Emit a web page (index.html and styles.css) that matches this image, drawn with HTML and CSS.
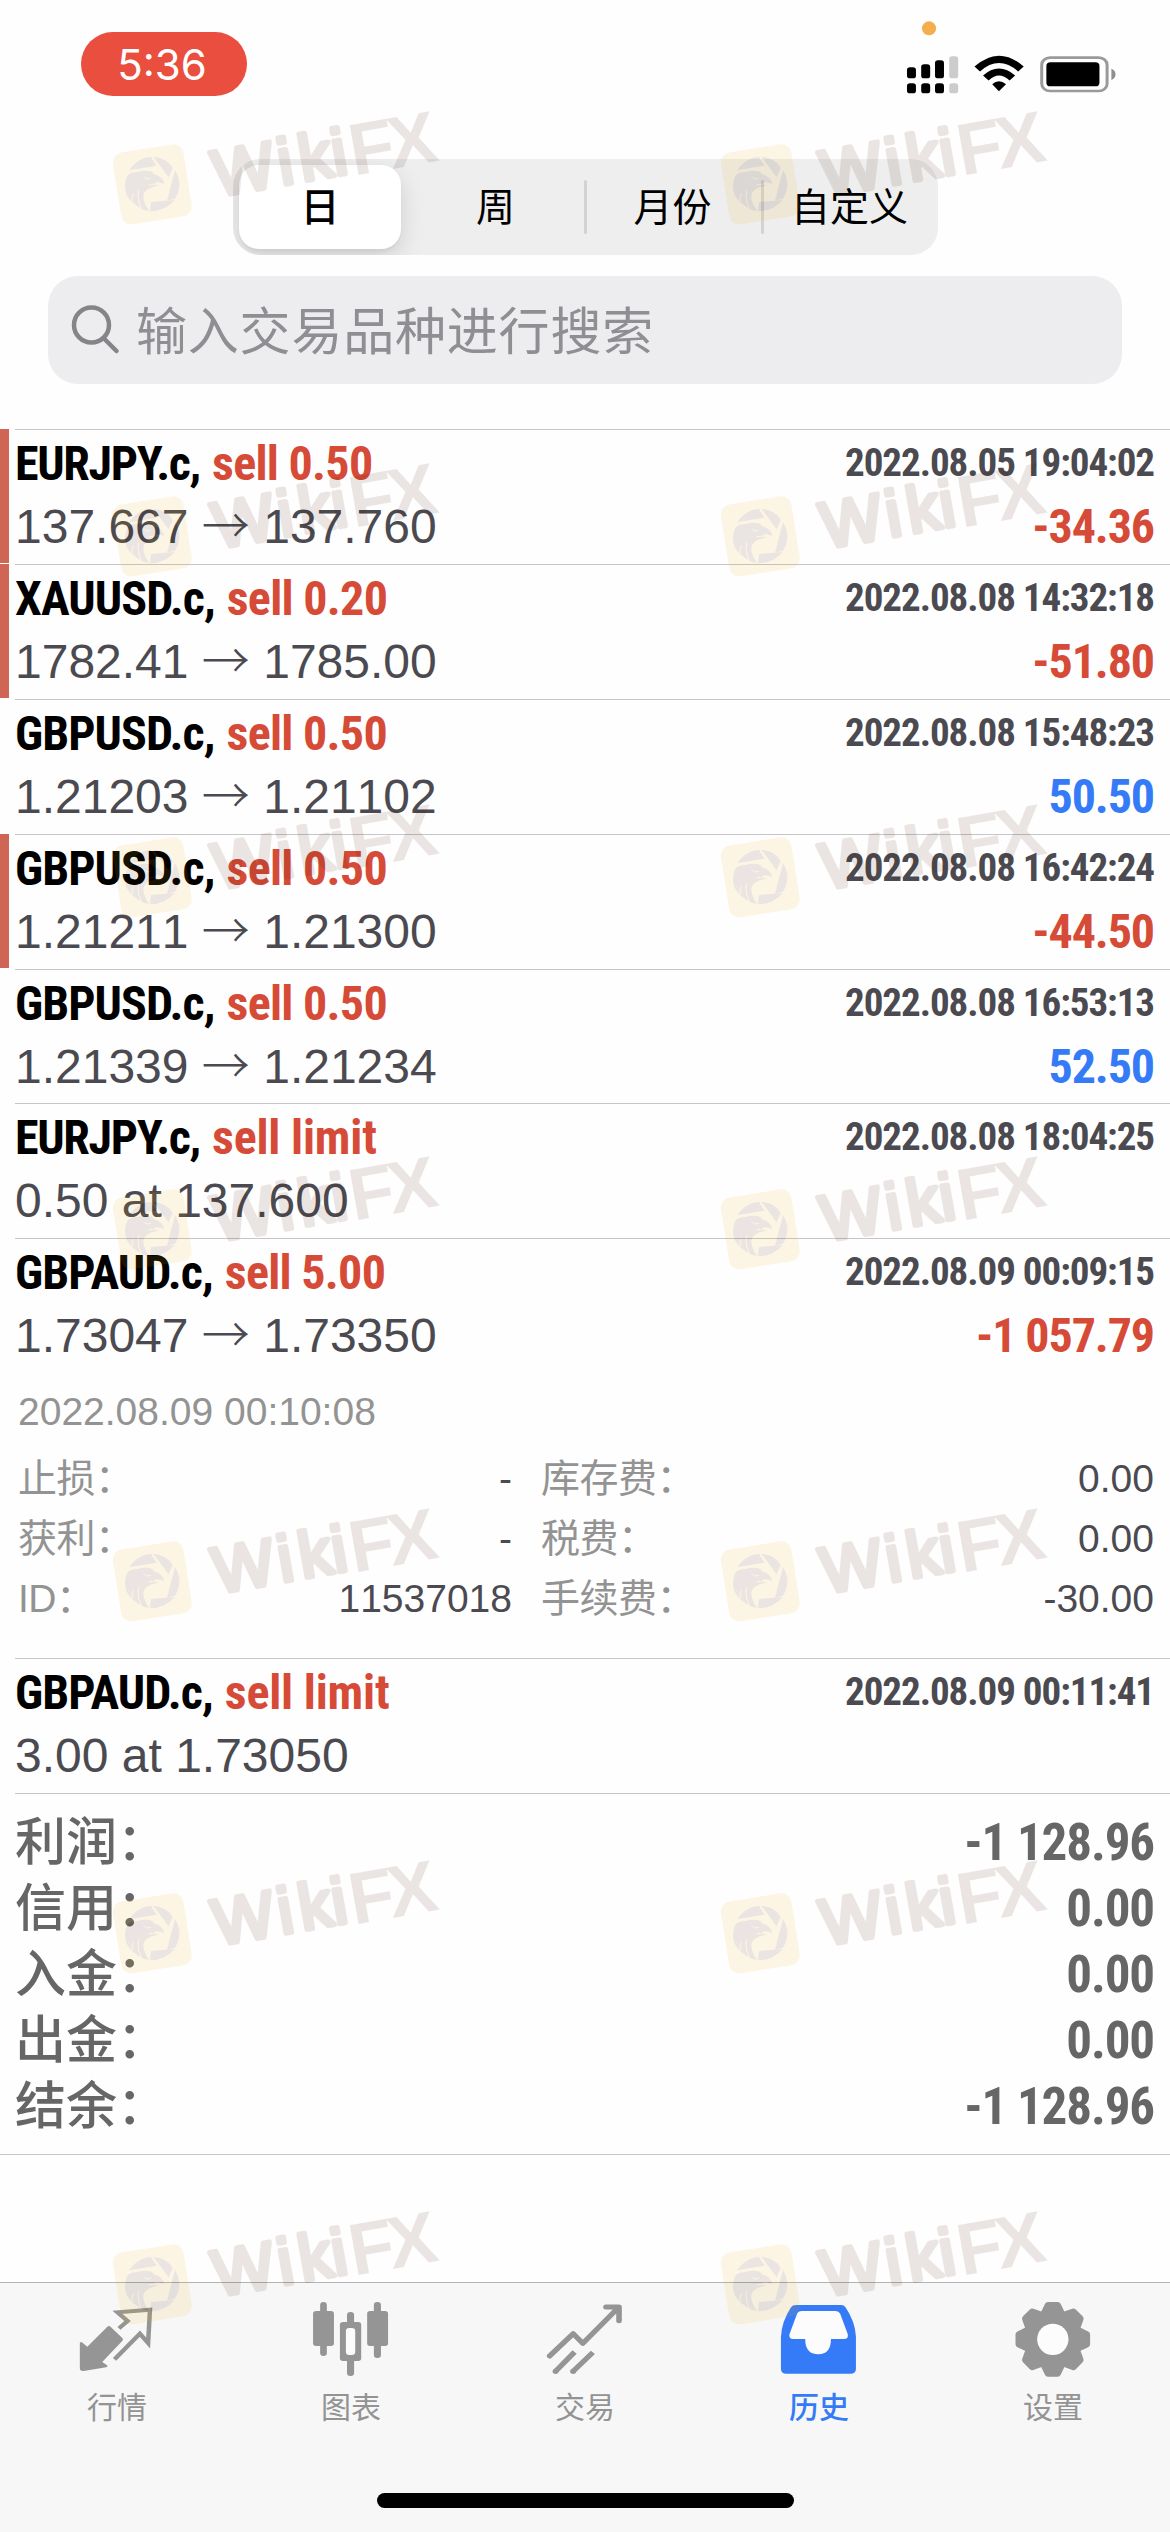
FILE: index.html
```html
<!DOCTYPE html>
<html lang="zh-CN">
<head>
<meta charset="utf-8">
<title>历史</title>
<link rel="stylesheet" href="styles.css">
</head>
<body>
<svg class="defs" aria-hidden="true">
  <symbol id="wm" viewBox="90 0 1000 380">
    <rect x="110" y="135" width="214" height="218" rx="30" fill="#f5af05" transform="rotate(-9 217 244)"/>
    <g fill="#411400">
      <path d="M147 202Q172 165 212 161L230 188Z"/>
      <path d="M220 161Q262 165 278 195L266 223Z"/>
      <path d="M285 201Q311 245 285 287L261 293Z"/>
      <path d="M213 297L284 291Q255 325 210 325Z"/>
      <path d="M143 216Q155 206 172 207Q195 200 216 206L222 214Q250 222 252 243L243 240Q232 236 222 240L240 248Q205 250 192 270Q184 292 208 324Q189 322 176 312Q140 290 136 262Q132 238 143 216Z"/>
    </g>
    <g fill="none" stroke="#f5af05" stroke-width="3">
      <path d="M190 222Q200 232 213 226M176 262Q170 290 184 316M160 272Q152 286 158 296M205 246Q222 240 240 248"/>
    </g>
    <g transform="translate(385 293) rotate(-10)" fill="#411400">
      <text class="wm-soft" x="28 225 289 389" y="-8">Wiki</text>
      <text class="wm-hard" x="443 560" y="2">FX</text>
    </g>
  </symbol>
</svg>

<div class="screen">
  <header class="status">
    <div class="clock">5:36</div>
    <svg class="status-icons" viewBox="855 50 570 240" preserveAspectRatio="none">
      <ellipse cx="922" cy="84" rx="19" ry="21" fill="#f3ae4e"/>
      <rect x="863" y="201" width="24" height="33" rx="8"/>
      <rect x="901" y="192" width="24" height="42" rx="8"/>
      <rect x="938" y="180" width="24" height="54" rx="8"/>
      <rect x="976" y="168" width="24" height="66" rx="8" fill="#ccc"/>
      <rect x="863" y="249" width="24" height="30" rx="8"/>
      <rect x="901" y="249" width="24" height="30" rx="8"/>
      <rect x="938" y="249" width="24" height="30" rx="8"/>
      <rect x="976" y="249" width="24" height="30" rx="8" fill="#ccc"/>
      <path d="M1051 206Q1109 148 1168 206M1074 233Q1109 197 1145 233" fill="none" stroke="#000" stroke-width="21"/>
      <path d="M1091 252Q1109 233 1128 252L1109 273Z"/>
      <rect x="1223.500" y="172" width="175" height="100" rx="22" fill="none" stroke="#9a9a9a" stroke-width="8"/>
      <rect x="1236" y="186" width="142" height="72" rx="11"/>
      <path d="M1410 205Q1421 210 1421 222Q1421 234 1410 239Z" fill="#8e8e8e"/>
    </svg>
  </header>

  <nav class="segments">
    <span class="seg seg-on">日</span>
    <span class="seg">周</span>
    <span class="seg seg-div">月份</span>
    <span class="seg seg-div">自定义</span>
  </nav>

  <div class="search">
    <svg class="search-icon" viewBox="0 0 50 50"><ellipse cx="20.500" cy="20" rx="17.500" ry="17.500"/><path d="M32.500 33L45.500 46"/></svg>
    <span>输入交易品种进行搜索</span>
  </div>

  <main class="list">
    <article class="deal marked"><div class="body">
      <div class="top"><span class="sym tight">EURJPY.c,</span><span class="side">sell 0.50</span><time>2022.08.05 19:04:02</time></div>
      <div class="bottom"><span>137.667 <i>→</i> 137.760</span><b class="loss">-34.36</b></div>
    </div></article>
    <article class="deal marked"><div class="body">
      <div class="top"><span class="sym">XAUUSD.c,</span><span class="side">sell 0.20</span><time>2022.08.08 14:32:18</time></div>
      <div class="bottom"><span>1782.41 <i>→</i> 1785.00</span><b class="loss">-51.80</b></div>
    </div></article>
    <article class="deal"><div class="body">
      <div class="top"><span class="sym">GBPUSD.c,</span><span class="side">sell 0.50</span><time>2022.08.08 15:48:23</time></div>
      <div class="bottom"><span>1.21203 <i>→</i> 1.21102</span><b class="gain">50.50</b></div>
    </div></article>
    <article class="deal marked"><div class="body">
      <div class="top"><span class="sym">GBPUSD.c,</span><span class="side">sell 0.50</span><time>2022.08.08 16:42:24</time></div>
      <div class="bottom"><span>1.21211 <i>→</i> 1.21300</span><b class="loss">-44.50</b></div>
    </div></article>
    <article class="deal"><div class="body">
      <div class="top"><span class="sym">GBPUSD.c,</span><span class="side">sell 0.50</span><time>2022.08.08 16:53:13</time></div>
      <div class="bottom"><span>1.21339 <i>→</i> 1.21234</span><b class="gain">52.50</b></div>
    </div></article>
    <article class="deal"><div class="body">
      <div class="top"><span class="sym tight">EURJPY.c,</span><span class="side limit">sell limit</span><time>2022.08.08 18:04:25</time></div>
      <div class="bottom"><span>0.50 at 137.600</span></div>
    </div></article>
    <article class="deal open"><div class="body">
      <div class="top"><span class="sym">GBPAUD.c,</span><span class="side">sell 5.00</span><time>2022.08.09 00:09:15</time></div>
      <div class="bottom"><span>1.73047 <i>→</i> 1.73350</span><b class="loss">-1 057.79</b></div>
      <div class="details">
        <div class="closed">2022.08.09 00:10:08</div>
        <dl>
          <div><dt>止损：</dt><dd>-</dd></div><div><dt>库存费：</dt><dd>0.00</dd></div>
          <div><dt>获利：</dt><dd>-</dd></div><div><dt>税费：</dt><dd>0.00</dd></div>
          <div><dt>ID：</dt><dd>11537018</dd></div><div><dt>手续费：</dt><dd>-30.00</dd></div>
        </dl>
      </div>
    </div></article>
    <article class="deal"><div class="body">
      <div class="top"><span class="sym">GBPAUD.c,</span><span class="side limit">sell limit</span><time>2022.08.09 00:11:41</time></div>
      <div class="bottom"><span>3.00 at 1.73050</span></div>
    </div></article>
    <section class="totals">
      <div><span>利润：</span><b>-1 128.96</b></div>
      <div><span>信用：</span><b>0.00</b></div>
      <div><span>入金：</span><b>0.00</b></div>
      <div><span>出金：</span><b>0.00</b></div>
      <div><span>结余：</span><b>-1 128.96</b></div>
    </section>
  </main>

  <footer class="tabbar">
    <div class="tabs">
      <a class="tab">
        <svg viewBox="179.600 330 268 270" preserveAspectRatio="none"><path d="M287 441Q292 435 297 441L327 473Q332 478 327 484L274 546L287 556Q290 560 285 562L224 573Q214 574 214 565V490Q216 483 222 489L234 500Z"/><path d="M319 445L342 423L315 397L402 389L397 489L375 461L307 538" fill="none" stroke="#959595" stroke-width="12"/></svg>
        <span>行情</span></a>
      <a class="tab">
        <svg viewBox="806.700 330 268 270" preserveAspectRatio="none"><rect x="858" y="366" width="18" height="162" rx="9"/><rect x="839" y="393" width="56" height="105" rx="8"/><rect x="930" y="396" width="19" height="192" rx="9"/><rect x="911" y="426" width="57" height="117" rx="8"/><rect x="1002" y="366" width="19" height="168" rx="9"/><rect x="984" y="393" width="56" height="105" rx="8"/><rect x="927" y="444" width="25" height="81" rx="9" fill="#fcfcfc"/></svg>
        <span>图表</span></a>
      <a class="tab">
        <svg viewBox="1433.800 330 268 270" preserveAspectRatio="none"><g fill="none" stroke="#959595" stroke-width="15"><path d="M1473 528L1536 461L1562 490L1658 382M1624 381H1659V422" stroke-linecap="round" stroke-linejoin="round"/><path d="M1488 575L1540 516M1535 575L1589 517"/></g><circle cx="1489" cy="574" r="8"/><circle cx="1536" cy="574" r="8"/></svg>
        <span>交易</span></a>
      <a class="tab tab-on">
        <svg viewBox="493 330 268 270" preserveAspectRatio="none"><path d="M525 470Q527 425 552 382Q556 375 566 375H686Q694 375 698 382Q724 425 726 470V566Q726 581 711 581H540Q525 581 525 566Z"/><path fill="#fcfcfc" d="M568 402Q571 393 581 393H670Q680 393 684 402L704 462Q707 477 694 477H659Q659 523 625 523Q590 523 590 477H558Q545 477 548 462Z"/></svg>
        <span>历史</span></a>
      <a class="tab">
        <svg viewBox="1120 330 268 270" preserveAspectRatio="none"><g transform="translate(1253.500 478) scale(1 1.120)"><circle r="80"/><g id="teeth" stroke="#959595" stroke-width="18" stroke-linejoin="round"><path id="tooth" d="M-13 -91H13L22 -72H-22Z"/><use href="#tooth" transform="rotate(45)"/><use href="#tooth" transform="rotate(90)"/><use href="#tooth" transform="rotate(135)"/><use href="#tooth" transform="rotate(180)"/><use href="#tooth" transform="rotate(225)"/><use href="#tooth" transform="rotate(270)"/><use href="#tooth" transform="rotate(315)"/></g><circle r="42" fill="#fcfcfc"/></g></svg>
        <span>设置</span></a>
    </div>
    <div class="home"></div>
  </footer>

  <div class="watermarks">
    <svg class="l r1"><use href="#wm"/></svg><svg class="r r1"><use href="#wm"/></svg>
    <svg class="l r2"><use href="#wm"/></svg><svg class="r r2"><use href="#wm"/></svg>
    <svg class="l r3"><use href="#wm"/></svg><svg class="r r3"><use href="#wm"/></svg>
    <svg class="l r4"><use href="#wm"/></svg><svg class="r r4"><use href="#wm"/></svg>
    <svg class="l r5"><use href="#wm"/></svg><svg class="r r5"><use href="#wm"/></svg>
    <svg class="l r6"><use href="#wm"/></svg><svg class="r r6"><use href="#wm"/></svg>
    <svg class="l r7"><use href="#wm"/></svg><svg class="r r7"><use href="#wm"/></svg>
  </div>
</div>
</body>
</html>
```
FILE: styles.css
```css
* { box-sizing: border-box; margin: 0; padding: 0; }

body {
  background: #fefefe;
  font-family: "Liberation Sans", "Noto Sans CJK SC", sans-serif;
  color: #000;
}

svg { display: block; }
.defs { position: absolute; width: 0; height: 0; }

.screen {
  position: relative;
  display: flex;
  flex-direction: column;
  width: 1170px;
  height: 2532px;
}

/* Status bar */
.status {
  display: flex;
  justify-content: space-between;
  height: 159px;
  padding: 17px 53px 0 81px;
}
.clock {
  width: 166px;
  height: 64px;
  margin-top: 15px;
  padding-right: 4px;
  border-radius: 32px;
  background: #e94e3e;
  color: #fff;
  font: 400 42px/65px Inter, sans-serif;
  text-align: center;
}
.status-icons { width: 213px; height: 80px; }

/* Period switch */
.segments {
  display: flex;
  width: 705px;
  height: 96px;
  margin-left: 233px;
  padding: 6px;
  border-radius: 27px;
  background: #eee;
  overflow: hidden;
}
.seg {
  position: relative;
  flex: 0 0 177px;
  font-size: 39px;
  line-height: 85px;
  text-align: center;
}
.seg-on {
  flex-basis: 162px;
  margin-right: 6px;
  border-radius: 20px;
  background: #fff;
  font-weight: 500;
  box-shadow: 0 9px 24px rgba(0, 0, 20, .13), 0 3px 3px rgba(0, 0, 0, .04);
}
.seg-div::before {
  content: "";
  position: absolute;
  left: 0;
  top: 15px;
  width: 3px;
  height: 54px;
  border-radius: 2px;
  background: #d3d3d6;
}

/* Search field */
.search {
  display: flex;
  align-items: center;
  height: 108px;
  margin: 21px 48px 45px;
  padding-left: 23px;
  border-radius: 30px;
  background: #ededef;
  color: #8e8e93;
  font-size: 51px;
  letter-spacing: .8px;
}
.search span { padding-bottom: 4px; }
.search-icon {
  width: 50px;
  height: 50px;
  margin-right: 15px;
  fill: none;
  stroke: #858589;
  stroke-width: 4.500;
  stroke-linecap: round;
}

/* Deals */
.list { flex: 1; }
.deal {
  display: flex;
  height: 134.900px;
  padding-left: 15px;
}
.marked { background: linear-gradient(#cf6655, #cf6655) 0 0 / 9px calc(100% - 1px) no-repeat; }
.body {
  flex: 1;
  padding: 3px 16px 0 0;
  border-top: 1px solid #c6c6c8;
}
.top, .bottom { display: flex; height: 62px; line-height: 62px; font-size: 48px; white-space: pre; }
.bottom { height: 63px; line-height: 63px; color: #4b4a50; justify-content: space-between; font-kerning: none; }
.bottom i { font: 300 48px/0 "Noto Sans CJK SC", sans-serif; }
.top { font-family: "Roboto Condensed", Roboto, sans-serif; font-weight: 700; }
.sym { letter-spacing: -.900px; margin-right: 12px; }
.tight { letter-spacing: -1.300px; }
.side { color: #d64b37; letter-spacing: -.7px; }
.limit { letter-spacing: -.2px; }
time {
  margin-left: auto;
  padding-top: 7px;
  font-size: 39px;
  line-height: 46px;
  letter-spacing: -1.050px;
  color: #4b4a50;
}
b { font: 700 48px/63px "Roboto Condensed", Roboto, sans-serif; letter-spacing: -1.100px; }
.loss { color: #d64b37; }
.gain { color: #357bf7; }

/* Expanded deal */
.open { height: 420px; }
.details { padding: 15px 0 0 3px; font-size: 39px; line-height: 60px; color: #939393; font-kerning: none; }
dl { display: grid; grid-template-columns: 494px 613px; justify-content: space-between; margin-top: 7px; }
dl div { display: flex; justify-content: space-between; height: 60px; }
dt { letter-spacing: -.5px; }
dd { color: #4b4a50; }

/* Totals */
.totals {
  height: 362px;
  padding: 17px 16px 0 15px;
  border-bottom: 1px solid #c6c6c8;
  background: linear-gradient(#c6c6c8, #c6c6c8) 15px 0 / 100% 1px no-repeat;
  color: #666;
}
.totals div { display: flex; justify-content: space-between; height: 66px; font-size: 51px; font-weight: 500; line-height: 66px; }
.totals b { font-size: 51px; line-height: 66px; }

/* Tab bar */
.tabbar { height: 250px; border-top: 1px solid #b3b3b3; background: #f7f7f7; }
.tabs { display: flex; height: 210px; padding-top: 7px; }
.tab { flex: 1; display: flex; flex-direction: column; align-items: center; color: #939393; font-size: 30px; line-height: 36px; }
.tab svg { width: 100px; height: 90px; margin-bottom: 10px; fill: #959595; }
.tab-on { color: #357bf7; font-weight: 500; }
.tab-on svg { fill: #357bf7; }
.home { width: 417px; height: 15px; margin: 0 auto; border-radius: 8px; background: #000; }

/* Diagonal brand marks laid over the whole screen */
.watermarks { position: absolute; inset: 0; opacity: .1; pointer-events: none; }
.watermarks svg { position: absolute; width: 333.300px; height: 126.700px; overflow: visible; }
#wm { overflow: visible; }
.wm-soft { font: 400 195px "Liberation Sans", sans-serif; stroke: #411400; stroke-width: 15px; stroke-linejoin: round; }
.wm-hard { font: 700 220px "Liberation Sans", sans-serif; }
.l { left: 110px; }
.r { left: 718px; }
.r1 { top: 103px; }
.r2 { top: 455px; }
.r3 { top: 796px; }
.r4 { top: 1148px; }
.r5 { top: 1500px; }
.r6 { top: 1852px; }
.r7 { top: 2203px; }
```
